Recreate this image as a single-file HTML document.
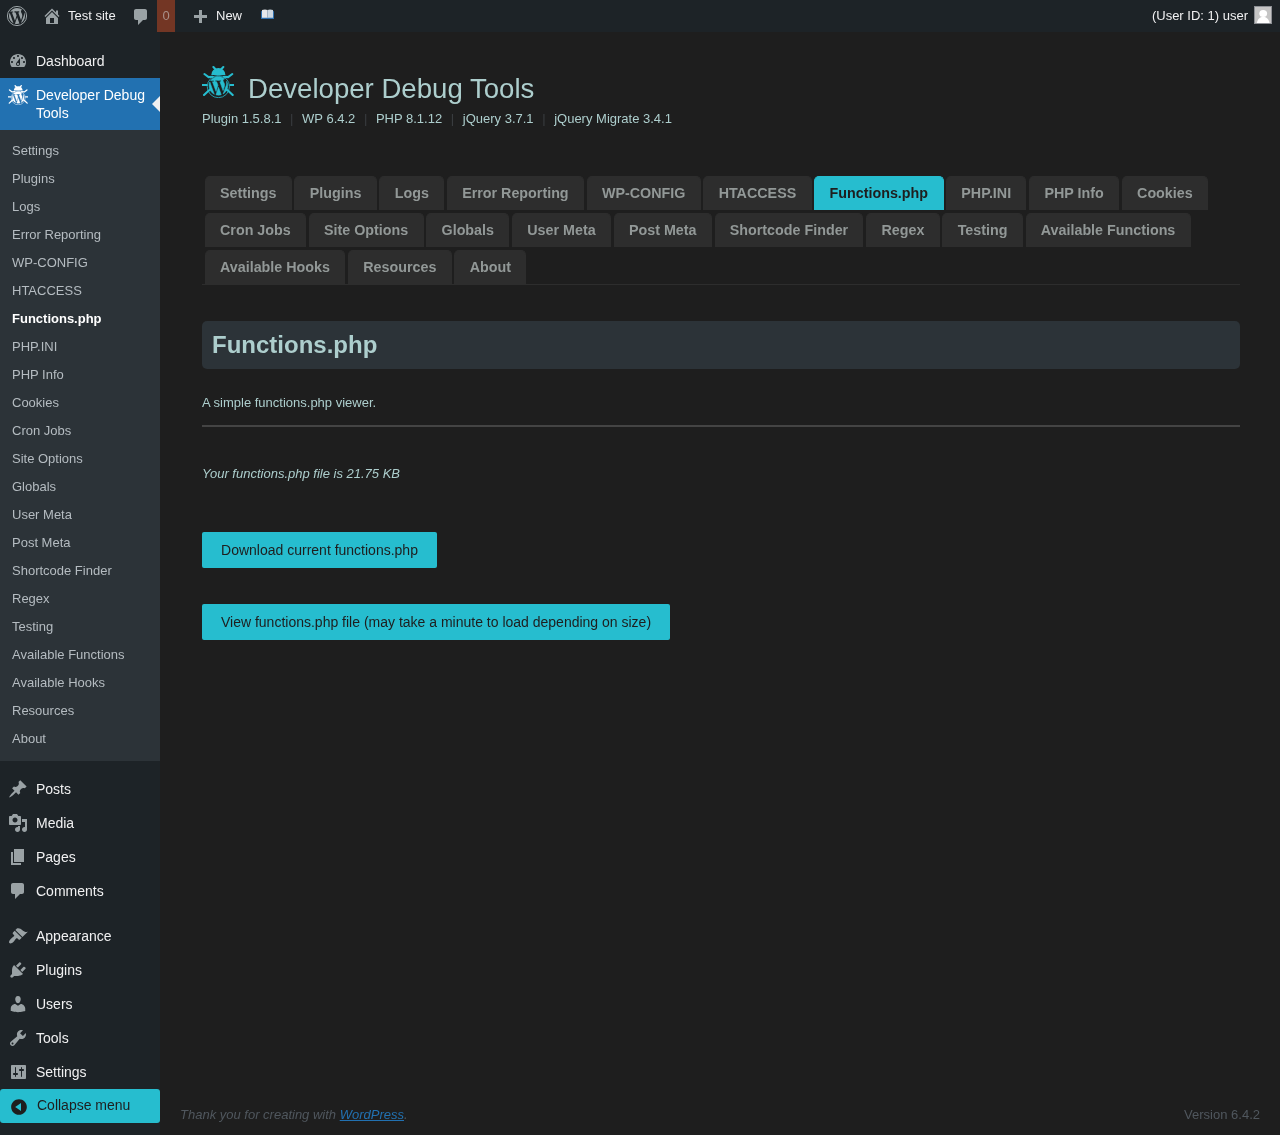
<!DOCTYPE html>
<html lang="en">
<head>
<meta charset="utf-8">
<title>Developer Debug Tools</title>
<style>
*{box-sizing:border-box;}
html,body{margin:0;padding:0;}
body{width:1280px;height:1135px;overflow:hidden;background:#1e1e1e;font-family:"Liberation Sans",sans-serif;font-size:13px;line-height:1.4;color:#adcecd;position:relative;}
a{text-decoration:none;color:inherit;}
svg{display:block;}
/* admin bar */
#bar{position:absolute;left:0;top:0;width:1280px;height:32px;background:#1d2327;color:#f0f0f1;font-size:13px;line-height:32px;}
#bar .it{position:absolute;top:0;height:32px;white-space:nowrap;}
#bar svg{position:absolute;fill:#9aa2a5;}
/* sidebar */
#side{position:absolute;left:0;top:32px;width:160px;height:1103px;background:#1d2327;}
#side .mi{position:absolute;left:0;width:160px;height:34px;color:#f0f0f1;font-size:14px;line-height:18px;}
#side .mi span{position:absolute;left:36px;top:8px;white-space:nowrap;}
#side .mi svg{position:absolute;left:8px;top:7px;width:20px;height:20px;fill:#9aa2a5;}
#side .cur{background:#2271b1;color:#fff;height:52px;}
#side .cur:after{content:"";position:absolute;right:0;top:18px;border:8px solid transparent;border-right-color:#f0f0f1;}
#sub{position:absolute;left:0;top:98px;width:160px;height:631px;background:#2c3338;padding-top:7px;}
#sub div{height:28px;padding:5px 12px;font-size:13px;line-height:18px;color:#b5bcc1;white-space:nowrap;}
#sub div.on{color:#fff;font-weight:bold;}
#collapse{position:absolute;left:0;top:1057px;width:160px;height:34px;background:#26bdcf;color:#1e1e1e;font-size:14px;line-height:32px;border-radius:3px;}
#collapse span{position:absolute;left:37px;top:0;}
#collapse svg{position:absolute;left:9px;top:7.700px;width:20px;height:20px;fill:#1e1e1e;}
/* content */
#main{position:absolute;left:202px;top:32px;width:1038px;}
h1{position:absolute;left:248px;top:69px;margin:0;font-size:27.6px;font-weight:normal;line-height:40px;color:#adcecd;white-space:nowrap;}
#ver{position:absolute;left:202px;top:110px;font-size:13px;line-height:18px;color:#adcecd;white-space:nowrap;}
#ver i{font-style:normal;color:#3a3d40;margin:0 8.6px;}
#tabs{position:absolute;left:202px;top:176px;width:1038px;height:109px;font-size:0;border-bottom:1px solid #2d2d2d;}
.tab{display:inline-block;vertical-align:top;margin:0 0 3px 2.73px;padding:0 14.3px;border:1px solid #2d2d2d;border-bottom:none;height:34px;background:#2d2d2d;color:#929897;font-size:14.3px;font-weight:bold;line-height:33px;border-radius:5px 5px 0 0;text-align:center;white-space:nowrap;}
.tab.act{background:#26bdcf;border-color:#26bdcf;color:#1e1e1e;padding-right:15.3px;margin-right:-1px;}
#h2{position:absolute;left:202px;top:321px;width:1038px;height:48px;background:#2c3338;border-radius:5px;color:#adcecd;font-size:24px;font-weight:bold;line-height:48px;padding-left:10px;}
#desc{position:absolute;left:202px;top:394px;font-size:13px;line-height:18px;color:#adcecd;}
#hr{position:absolute;left:202px;top:425px;width:1038px;height:2px;background:#444;}
#size{position:absolute;left:202px;top:465px;font-size:13px;line-height:18px;font-style:italic;color:#adcecd;}
.btn{position:absolute;left:202px;height:36px;background:#26bdcf;color:#1e1e1e;font-size:14px;line-height:36px;border-radius:2px;text-align:center;white-space:nowrap;}
#foot{position:absolute;left:180px;top:1106px;font-size:13px;line-height:18px;font-style:italic;color:#50575e;}
#foot a{color:#2271b1;text-decoration:underline;}
#fver{position:absolute;right:20px;top:1106px;font-size:13px;line-height:18px;color:#50575e;}
</style>
</head>
<body>
<div id="L" style="position:absolute;left:0;top:0;width:1280px;height:1135px;will-change:transform">
<svg width="0" height="0" style="position:absolute"><defs><symbol id="bug" viewBox="0 0 32 32">
<path d="M9.250 8.950A7.100 7.050 0 0 1 23.450 8.950z"/>
<g fill="none" stroke="currentColor" stroke-width="2.100" stroke-linecap="round" stroke-linejoin="round">
<path d="M11.400 1.100L14.400 4.200M21.300 1.100L18.300 4.200"/>
<path d="M2.400 8L6.600 11.100L10.800 10.700M30.300 8L26.100 11.100L21.900 10.700"/>
<path d="M2 29L6 25.200L8 23.800M30.700 29L26.700 25.200L24.800 23.800"/>
</g>
<path d="M0 18h5.300v1.900H0zM27.500 18h4.600v1.900h-4.600z"/>
<circle cx="16.350" cy="20.600" r="11.100" fill="none" stroke="currentColor" stroke-width=".800"/>
<path stroke="currentColor" stroke-width=".55" stroke-linejoin="round" transform="translate(5.900 9.300) scale(1.05)" d="M7.780 15.370L4.370 6.220c.550-.020 1.170-.080 1.170-.080.500-.060.440-1.130-.060-1.110 0 0-1.450.110-2.370.110-.180 0-.370 0-.580-.010C4.120 2.690 6.870 1.110 10 1.110c2.330 0 4.450.870 6.050 2.340-.680-.110-1.650.390-1.650 1.580 0 .740.450 1.360.900 2.100.350.610.550 1.360.550 2.460 0 1.490-1.400 5-1.400 5l-3.030-8.370c.540-.020.820-.170.820-.170.500-.050.440-1.250-.060-1.220 0 0-1.440.120-2.380.120-.870 0-2.330-.120-2.330-.120-.500-.030-.560 1.200-.060 1.220l.920.080 1.260 3.410zM17.410 10c.240-.640.740-1.870.430-4.250.700 1.290 1.050 2.710 1.050 4.250 0 3.290-1.730 6.240-4.400 7.780.970-2.590 1.940-5.200 2.920-7.780zM6.100 18.090C3.120 16.650 1.110 13.530 1.110 10c0-1.300.230-2.480.720-3.590C3.250 10.300 4.670 14.200 6.100 18.090zm4.030-6.630l2.580 6.980c-.860.290-1.760.450-2.710.450-.790 0-1.570-.110-2.290-.330.810-2.380 1.620-4.740 2.420-7.100z"/>
</symbol></defs></svg>
<div id="bar">
<svg style="left:7px;top:6px;width:20px;height:20px" viewBox="0 0 20 20"><circle cx="10" cy="10" r="9.600" fill="none" stroke="#9aa2a5" stroke-width="1"/><path transform="translate(10 10) scale(.900) translate(-10 -10)" d="M7.780 15.370L4.370 6.220c.550-.020 1.170-.080 1.170-.080.500-.060.440-1.130-.060-1.110 0 0-1.450.110-2.370.110-.180 0-.370 0-.580-.010C4.120 2.690 6.870 1.110 10 1.110c2.330 0 4.450.870 6.050 2.340-.680-.110-1.650.390-1.650 1.580 0 .740.450 1.360.900 2.100.350.610.550 1.360.550 2.460 0 1.490-1.400 5-1.400 5l-3.030-8.370c.540-.020.820-.170.820-.170.500-.050.440-1.250-.060-1.220 0 0-1.440.120-2.380.120-.870 0-2.330-.120-2.330-.120-.500-.030-.560 1.200-.060 1.220l.920.080 1.260 3.410zM17.410 10c.240-.640.740-1.870.430-4.250.700 1.290 1.050 2.710 1.050 4.250 0 3.290-1.730 6.240-4.400 7.780.970-2.590 1.940-5.200 2.920-7.780zM6.100 18.090C3.120 16.650 1.110 13.530 1.110 10c0-1.300.230-2.480.720-3.590C3.250 10.300 4.670 14.200 6.100 18.090zm4.030-6.630l2.580 6.980c-.860.290-1.760.450-2.710.450-.790 0-1.570-.110-2.290-.330.810-2.380 1.620-4.740 2.420-7.100z"/></svg>
<svg style="left:42px;top:6px;width:20px;height:20px" viewBox="0 0 20 20"><path d="M16 8.500l1.530 1.530-1.060 1.060L10 4.620l-6.470 6.470-1.060-1.060L10 2.500l4 4v-2h2v4zm-6-2.460l6 5.990V18H4v-5.970zM12 17v-5H8v5h4z"/></svg>
<div class="it" style="left:68px">Test site</div>
<svg style="left:131px;top:7px;width:20px;height:20px" viewBox="0 0 20 20"><path d="M5 2h9c1.100 0 2 .900 2 2v7c0 1.100-.900 2-2 2h-2l-5 5v-5H5c-1.100 0-2-.900-2-2V4c0-1.100.900-2 2-2z"/></svg>
<div class="it" style="left:157px;width:18px;background:#733624;color:#a88f88;text-align:center">0</div>
<svg style="left:190px;top:8px;width:20px;height:20px" viewBox="0 0 20 20"><path d="M17 7v3h-5v5H9v-5H4V7h5V2h3v5h5z"/></svg>
<div class="it" style="left:216px">New</div>
<svg style="left:260px;top:9px;width:15px;height:11px" viewBox="0 0 15 11"><rect x="1" y="1.900" width="13" height="8.200" rx=".600" fill="#2f6fae"/><path d="M2 1.100C3.500.300 6 .100 7.400 1V8.800H2z" fill="#e7e8eb"/><path d="M13 1.100C11.500.300 9 .100 7.600 1V8.800H13z" fill="#cdd8e2"/><rect x="7.150" y=".900" width=".700" height="8" fill="#aab6c2"/></svg>
<div class="it" style="right:32px">(User ID: 1) user</div>
<div style="position:absolute;left:1254px;top:6px;width:18px;height:18px;background:#c5c5c5;border:1px solid #8c8f94;overflow:hidden"><svg style="left:0;top:0;width:16px;height:16px;fill:#fff" viewBox="0 0 16 16"><ellipse cx="8.200" cy="6.400" rx="3.900" ry="3.500"/><path d="M1.700 16.500C2.300 12.300 5 9.700 8.200 9.700s5.900 2.600 6.500 6.800z"/></svg></div>
</div>
<div id="side">
<div class="mi " style="top:12px"><svg viewBox="0 0 20 20"><path d="M3.760 16h12.480c1.100-1.370 1.760-3.110 1.760-5 0-4.420-3.580-8-8-8s-8 3.580-8 8c0 1.890.660 3.630 1.760 5zM10 4c.550 0 1 .450 1 1s-.450 1-1 1-1-.450-1-1 .450-1 1-1zM6 6c.550 0 1 .450 1 1s-.450 1-1 1-1-.450-1-1 .450-1 1-1zm8 0c.550 0 1 .450 1 1s-.450 1-1 1-1-.450-1-1 .450-1 1-1zm-5.370 5.550L12 7v6c0 1.100-.900 2-2 2s-2-.900-2-2c0-.570.240-1.080.630-1.450zM4 10c.550 0 1 .450 1 1s-.450 1-1 1-1-.450-1-1 .450-1 1-1zm12 0c.550 0 1 .450 1 1s-.450 1-1 1-1-.450-1-1 .450-1 1-1zm-5 3c0-.550-.450-1-1-1s-1 .450-1 1 .450 1 1 1 1-.450 1-1z"/></svg><span>Dashboard</span></div>
<div class="mi cur" style="top:46px"><svg style="left:8px;top:7px;width:20px;height:20px;color:#fff;fill:#fff"><use href="#bug"/></svg><span style="white-space:normal;width:120px">Developer Debug Tools</span></div>
<div id="sub"><div>Settings</div><div>Plugins</div><div>Logs</div><div>Error Reporting</div><div>WP-CONFIG</div><div>HTACCESS</div><div class=on>Functions.php</div><div>PHP.INI</div><div>PHP Info</div><div>Cookies</div><div>Cron Jobs</div><div>Site Options</div><div>Globals</div><div>User Meta</div><div>Post Meta</div><div>Shortcode Finder</div><div>Regex</div><div>Testing</div><div>Available Functions</div><div>Available Hooks</div><div>Resources</div><div>About</div></div>
<div class="mi " style="top:740px"><svg viewBox="0 0 20 20"><path d="M10.440 3.020l1.820-1.820 6.360 6.350-1.830 1.820c-1.050-.680-2.480-.570-3.410.360l-.750.750c-.920.930-1.040 2.350-.350 3.410l-1.830 1.820-2.410-2.410-2.800 2.790c-.420.420-3.380 2.710-3.800 2.290s1.860-3.390 2.280-3.810l2.790-2.790L4.100 9.360l1.830-1.820c1.050.690 2.480.570 3.400-.360l.750-.750c.930-.920 1.050-2.350.360-3.410z"/></svg><span>Posts</span></div>
<div class="mi " style="top:774px"><svg viewBox="0 0 20 20"><path d="M13 11V4c0-.550-.450-1-1-1h-1.670L9 1H5L3.670 3H2c-.550 0-1 .450-1 1v7c0 .550.450 1 1 1h10c.550 0 1-.450 1-1zM7 4.500c1.380 0 2.500 1.120 2.500 2.500S8.380 9.500 7 9.500 4.500 8.380 4.500 7 5.620 4.500 7 4.500zM14 6h5v10.500c0 1.380-1.120 2.500-2.500 2.500S14 17.880 14 16.500s1.120-2.500 2.500-2.500c.170 0 .340.020.500.050V9h-3V6zm-4 8.050V13h2v3.500c0 1.380-1.120 2.500-2.500 2.500S7 17.880 7 16.500 8.120 14 9.500 14c.170 0 .340.020.500.050z"/></svg><span>Media</span></div>
<div class="mi " style="top:808px"><svg viewBox="0 0 20 20"><path d="M6 15V2h10v13H6zm-1 1h8v2H3V5h2v11z"/></svg><span>Pages</span></div>
<div class="mi " style="top:842px"><svg viewBox="0 0 20 20"><path d="M5 2h9c1.100 0 2 .900 2 2v7c0 1.100-.900 2-2 2h-2l-5 5v-5H5c-1.100 0-2-.900-2-2V4c0-1.100.900-2 2-2z"/></svg><span>Comments</span></div>
<div class="mi " style="top:887px"><svg viewBox="0 0 20 20"><path d="M14.480 11.060L7.410 3.990l1.500-1.500c.500-.560 2.300-.470 3.510.320 1.210.800 1.430 1.280 2.910 2.100 1.180.640 2.450 1.260 4.450.850zm-.710.710L6.700 4.700 4.930 6.470c-.390.390-.390 1.020 0 1.410l1.060 1.060c.390.390.390 1.030 0 1.420-.600.600-1.430 1.110-2.210 1.690-.350.260-.700.530-1.010.840C1.430 14.230.400 16.080 1.400 17.070c.990 1 2.840-.030 4.180-1.360.310-.310.580-.660.850-1.020.570-.780 1.080-1.610 1.690-2.210.390-.390 1.020-.390 1.410 0l1.060 1.060c.390.390 1.020.390 1.410 0z"/></svg><span>Appearance</span></div>
<div class="mi " style="top:921px"><svg viewBox="0 0 20 20"><path d="M13.110 4.360L9.870 7.600 8 5.730l3.240-3.240c.350-.340 1.050-.200 1.560.320.520.510.660 1.210.310 1.550zm-8 1.770l.910-1.120 9.010 9.010-1.190.840c-.710.710-2.630 1.160-3.820 1.160H6.140L4.900 17.260c-.590.590-1.540.590-2.120 0-.590-.580-.590-1.530 0-2.120L4.020 13.900v-3.880c0-1.130.390-3.190 1.090-3.890zm7.260 3.970l3.240-3.240c.340-.350 1.040-.210 1.550.310.520.510.660 1.210.310 1.550l-3.240 3.250z"/></svg><span>Plugins</span></div>
<div class="mi " style="top:955px"><svg viewBox="0 0 20 20"><path d="M10 9.250c-2.270 0-2.730-3.440-2.730-3.440C7 4.020 7.820 2 9.970 2c2.160 0 2.980 2.020 2.710 3.810 0 0-.410 3.440-2.680 3.440zm0 2.570L12.720 10c2.390 0 4.520 2.330 4.520 4.530v2.490s-3.650 1.130-7.240 1.130c-3.650 0-7.240-1.130-7.240-1.130v-2.490c0-2.250 1.940-4.480 4.470-4.480z"/></svg><span>Users</span></div>
<div class="mi " style="top:989px"><svg viewBox="0 0 20 20"><path d="M16.680 9.770c-1.340 1.340-3.300 1.670-4.950.990l-5.410 6.520c-.990.990-2.590.990-3.580 0s-.990-2.590 0-3.570l6.520-5.420c-.680-1.650-.350-3.610.990-4.950 1.280-1.280 3.120-1.620 4.720-1.060l-2.890 2.890 2.820 2.820 2.860-2.870c.530 1.580.180 3.390-1.080 4.650zM3.810 16.210c.400.390 1.040.390 1.430 0 .400-.400.400-1.040 0-1.430-.390-.400-1.030-.400-1.430 0-.390.390-.390 1.030 0 1.430z"/></svg><span>Tools</span></div>
<div class="mi " style="top:1023px"><svg viewBox="0 0 20 20"><path d="M18 16V4c0-.550-.450-1-1-1H4c-.550 0-1 .450-1 1v12c0 .550.450 1 1 1h13c.550 0 1-.450 1-1zM8 11h1c.550 0 1 .450 1 1s-.450 1-1 1H8v1.500c0 .280-.220.500-.500.500s-.500-.220-.500-.500V13H6c-.550 0-1-.450-1-1s.450-1 1-1h1V5.500c0-.280.220-.500.500-.500s.500.220.500.500V11zm5-2h-1c-.550 0-1-.450-1-1s.450-1 1-1h1V5.500c0-.280.220-.500.500-.500s.500.220.500.500V7h1c.550 0 1 .450 1 1s-.450 1-1 1h-1v5.500c0 .280-.220.500-.500.500s-.500-.220-.500-.500V9z"/></svg><span>Settings</span></div>
<div id="collapse"><svg viewBox="0 0 20 20"><path d="M10 2.160c4.330 0 7.840 3.510 7.840 7.840s-3.510 7.840-7.840 7.840S2.160 14.330 2.160 10 5.670 2.160 10 2.160zm2 11.720V6.120L6.180 9.970z"/></svg><span>Collapse menu</span></div>
</div>
<svg style="position:absolute;left:202px;top:66px;width:32px;height:32px;color:#26bdcf;fill:#26bdcf"><use href="#bug"/></svg>
<h1>Developer Debug Tools</h1>
<div id="ver">Plugin 1.5.8.1<i>|</i>WP 6.4.2<i>|</i>PHP 8.1.12<i>|</i>jQuery 3.7.1<i>|</i>jQuery Migrate 3.4.1</div>
<div id="tabs"><span class="tab">Settings</span><span class="tab">Plugins</span><span class="tab">Logs</span><span class="tab">Error Reporting</span><span class="tab">WP-CONFIG</span><span class="tab">HTACCESS</span><span class="tab act">Functions.php</span><span class="tab">PHP.INI</span><span class="tab">PHP Info</span><span class="tab">Cookies</span><span class="tab">Cron Jobs</span><span class="tab">Site Options</span><span class="tab">Globals</span><span class="tab">User Meta</span><span class="tab">Post Meta</span><span class="tab">Shortcode Finder</span><span class="tab">Regex</span><span class="tab">Testing</span><span class="tab">Available Functions</span><span class="tab">Available Hooks</span><span class="tab">Resources</span><span class="tab">About</span></div>
<div id="h2">Functions.php</div>
<div id="desc">A simple functions.php viewer.</div>
<div id="hr"></div>
<div id="size">Your functions.php file is 21.75 KB</div>
<div class="btn" style="top:532px;width:235px">Download current functions.php</div>
<div class="btn" style="top:604px;width:468px">View functions.php file (may take a minute to load depending on size)</div>
<div id="foot">Thank you for creating with <a>WordPress</a>.</div>
<div id="fver">Version 6.4.2</div>
</div>
</body>
</html>
